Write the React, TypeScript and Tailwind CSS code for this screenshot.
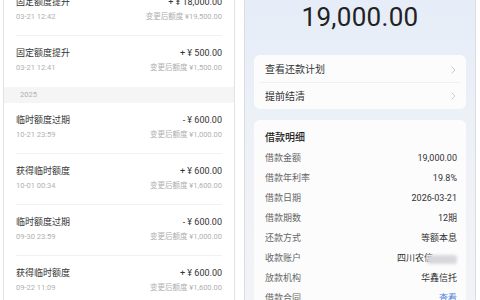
import React from 'react';

// ─── Data ─────────────────────────────────────────────────────────────────────
interface QuotaRecord {
    title: string;
    time: string;
    amount: string;
    after: string;
}

const recent: QuotaRecord[] = [
    { title: '固定额度提升', time: '03-21 12:42', amount: '+ ¥ 18,000.00', after: '变更后额度 ¥19,500.00' },
    { title: '固定额度提升', time: '03-21 12:41', amount: '+ ¥ 500.00', after: '变更后额度 ¥1,500.00' },
];

const older: QuotaRecord[] = [
    { title: '临时额度过期', time: '10-21 23:59', amount: '- ¥ 600.00', after: '变更后额度 ¥1,000.00' },
    { title: '获得临时额度', time: '10-01 00:34', amount: '+ ¥ 600.00', after: '变更后额度 ¥1,600.00' },
    { title: '临时额度过期', time: '09-30 23:59', amount: '- ¥ 600.00', after: '变更后额度 ¥1,000.00' },
    { title: '获得临时额度', time: '09-22 11:09', amount: '+ ¥ 600.00', after: '变更后额度 ¥1,600.00' },
];

const details: { label: string; value: string }[] = [
    { label: '借款金额', value: '19,000.00' },
    { label: '借款年利率', value: '19.8%' },
    { label: '借款日期', value: '2026-03-21' },
    { label: '借款期数', value: '12期' },
    { label: '还款方式', value: '等额本息' },
    { label: '收款账户', value: '四川农信' },
    { label: '放款机构', value: '华鑫信托' },
    { label: '借款合同', value: '查看' },
];

const font = { fontFamily: 'Roboto, "Noto Sans CJK SC", sans-serif' };

function RecordRow({ r, divider, first }: { r: QuotaRecord; divider: boolean; first?: boolean }) {
    return (
        <div className={`mx-[12px] pt-[11px] pb-[13px] ${divider ? 'border-b border-[#f1f1f1]' : 'pb-[14px]'} ${first ? '-mt-[15px]' : ''}`}>
            <div className="flex justify-between items-center h-[12px] text-[9px] leading-[12px] text-[#333]">
                <span>{r.title}</span>
                <span>{r.amount}</span>
            </div>
            <div className="flex justify-between items-center h-[10px] mt-[4px] text-[7.5px] leading-[10px] text-[#b0b0b0]">
                <span>{r.time}</span>
                <span>{r.after}</span>
            </div>
        </div>
    );
}

function Chevron() {
    return (
        <svg width="5" height="8" viewBox="0 0 5 8" fill="none">
            <path d="M1 1l3 3-3 3" stroke="#c4c4c4" strokeWidth="0.9" strokeLinecap="round" strokeLinejoin="round" />
        </svg>
    );
}

export default function App() {
    return (
        <div className="w-[480px] h-[300px] overflow-hidden bg-white flex" style={font}>
            {/* Left: quota history */}
            <div className="ml-[3px] w-[232px] h-full border-l border-r border-[#e2e2e2] bg-white overflow-hidden">
                {recent.map((r, i) => (
                    <RecordRow key={i} r={r} divider={i < recent.length - 1} first={i === 0} />
                ))}
                <div className="h-[16px] bg-[#f5f5f5] px-[16px] flex items-center text-[7.5px] text-[#b0b0b0]">2025</div>
                {older.map((r, i) => (
                    <RecordRow key={i} r={r} divider={i < older.length - 1} />
                ))}
            </div>

            {/* Right: loan detail */}
            <div className="ml-[9px] w-[232px] h-full border-l border-r border-[#dcdcdc] bg-gradient-to-b from-[#e6edf8] via-[#eef1f7] to-[#f2f3f6] px-[9px] overflow-hidden">
                <div className="h-[34px] flex items-center justify-center text-[26px] text-[#222] tracking-[0.3px]">19,000.00</div>

                <div className="mt-[21px] bg-[#fcfcfd] rounded-[6px] px-[6px]">
                    <div className="h-[28px] flex items-center justify-between pl-[5px] pr-[4px] pt-[2px] text-[10px] text-[#333] border-b border-[#f0f0f0]">
                        <span>查看还款计划</span>
                        <Chevron />
                    </div>
                    <div className="h-[26px] flex items-center justify-between pl-[5px] pr-[4px] text-[10px] text-[#333]">
                        <span>提前结清</span>
                        <Chevron />
                    </div>
                </div>

                <div className="mt-[11px] bg-[#fcfcfd] rounded-[6px] pl-[11px] pr-[9px] pt-[11px] pb-[10px]">
                    <div className="h-[14px] leading-[14px] text-[10px] font-medium text-[#222]">借款明细</div>
                    <div className="mt-[4px]">
                        {details.map((d) => (
                            <div key={d.label} className="h-[20px] flex items-center justify-between text-[9px]">
                                <span className="text-[#666]">{d.label}</span>
                                {d.label === '收款账户' ? (
                                    <span className="flex items-center text-[#333]">
                                        <span>四川农信</span>
                                        <span className="-ml-[6px] w-[30px] h-[9px] bg-[#d8d8dc] rounded-[3px] blur-[1.5px]" />
                                    </span>
                                ) : (
                                    <span className={d.label === '借款合同' ? 'text-[#4a7fe0]' : 'text-[#333]'}>{d.value}</span>
                                )}
                            </div>
                        ))}
                    </div>
                </div>
            </div>
        </div>
    );
}
